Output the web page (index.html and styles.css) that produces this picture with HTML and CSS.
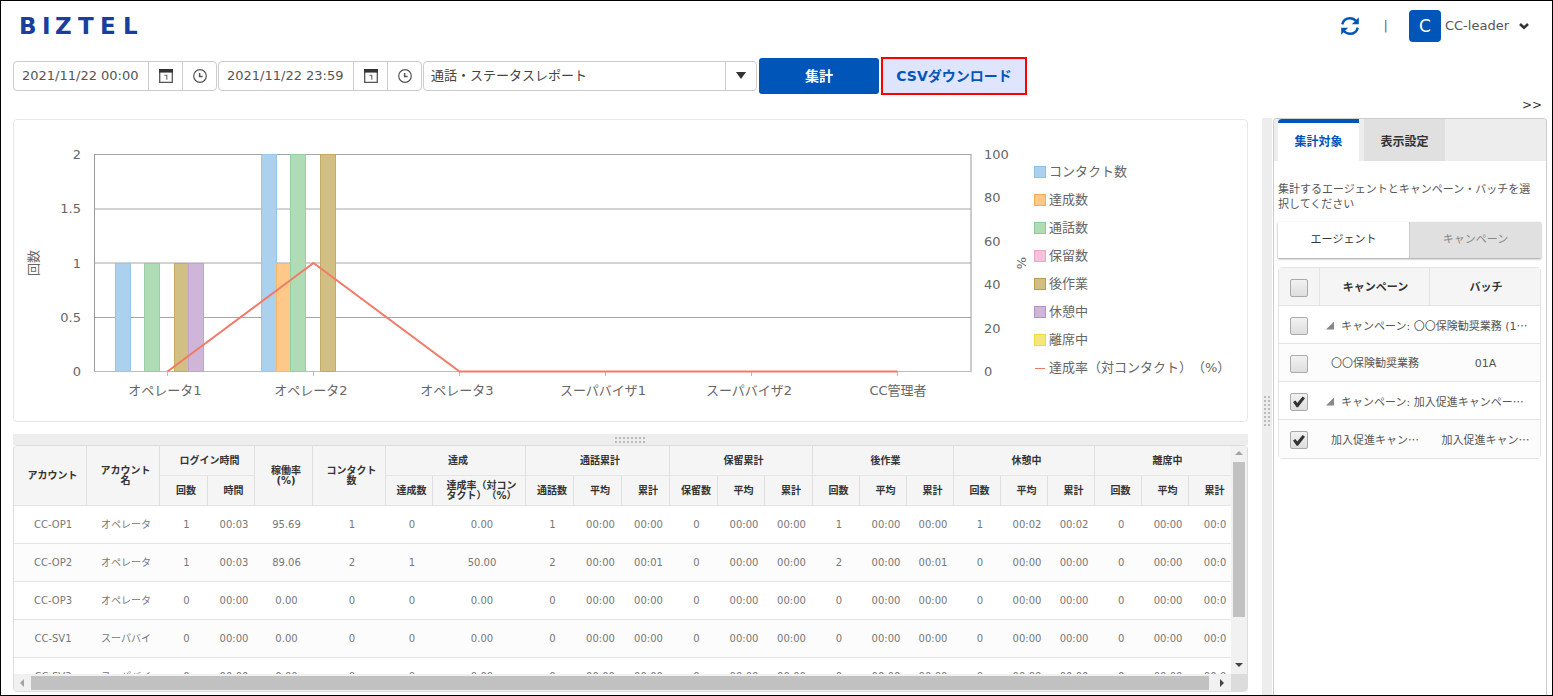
FILE: index.html
```html
<!DOCTYPE html>
<html lang="ja">
<head>
<meta charset="utf-8">
<title>BIZTEL 通話・ステータスレポート</title>
<link rel="stylesheet" href="styles.css">
</head>
<body>
<div class="app">
  <header class="header">
    <svg class="logo" width="130" height="24" viewBox="0 0 130 24" role="img" aria-label="BIZTEL">
      <text class="logo-text" x="0 23 36 59 81 104" y="20">BIZTEL</text>
    </svg>
    <div class="account">
      <button class="icon-button" type="button" aria-label="更新">
        <svg width="20" height="20" viewBox="0 0 20 20" fill="none" stroke="#0056b8" stroke-width="2.4">
          <path d="M2.2 8.4C3.2 4.600 6.4 2.2 10 2.2C12.6 2.2 14.8 3.4 16.4 5.2"/>
          <path d="M17.8 11.6C16.8 15.4 13.6 17.8 10 17.8C7.4 17.8 5.2 16.600 3.6 14.8"/>
          <path d="M18.8 1.2V8.2H11.8Z" fill="#0056b8" stroke="none"/>
          <path d="M1.2 18.8V11.8H8.2Z" fill="#0056b8" stroke="none"/>
        </svg>
      </button>
      <span class="divider">|</span>
      <button class="user" type="button">
        <span class="avatar">C</span>
        <span>CC-leader</span>
        <svg width="10" height="8" viewBox="0 0 10 8" fill="none" stroke="#333" stroke-width="2.6"><path d="M1 2L5 5.8L9 2"/></svg>
      </button>
    </div>
  </header>

  <form class="toolbar">
    <div class="datetime">
      <input class="datetime-input" type="text" value="2021/11/22 00:00" aria-label="開始日時">
      <button class="picker" type="button" aria-label="日付を選択"><svg width="14" height="14" viewBox="0 0 14 14"><path d="M.7 1v12.3h12.6V1" fill="none" stroke="#555" stroke-width="1.3"/><path d="M0 0h14v3.6H0z" fill="#333"/><path d="M5.4 6.2h2.4v4.6" fill="none" stroke="#666" stroke-width="1.1"/></svg></button>
      <button class="picker" type="button" aria-label="時刻を選択"><svg width="14" height="14" viewBox="0 0 14 14" fill="none" stroke="#555" stroke-width="1.2"><circle cx="7" cy="7" r="6.3"/><path d="M6.6 4v3.6h3" stroke-width="1.5"/></svg></button>
    </div>
    <div class="datetime">
      <input class="datetime-input" type="text" value="2021/11/22 23:59" aria-label="終了日時">
      <button class="picker" type="button" aria-label="日付を選択"><svg width="14" height="14" viewBox="0 0 14 14"><path d="M.7 1v12.3h12.6V1" fill="none" stroke="#555" stroke-width="1.3"/><path d="M0 0h14v3.6H0z" fill="#333"/><path d="M5.4 6.2h2.4v4.6" fill="none" stroke="#666" stroke-width="1.1"/></svg></button>
      <button class="picker" type="button" aria-label="時刻を選択"><svg width="14" height="14" viewBox="0 0 14 14" fill="none" stroke="#555" stroke-width="1.2"><circle cx="7" cy="7" r="6.3"/><path d="M6.6 4v3.6h3" stroke-width="1.5"/></svg></button>
    </div>
    <div class="report">
      <select class="report-select" aria-label="レポート種別"><option>通話・ステータスレポート</option></select>
      <span class="report-arrow"></span>
    </div>
    <button class="button-primary" type="button">集計</button>
    <button class="button-csv" type="button">CSVダウンロード</button>
  </form>

  <div class="collapse-row"><button class="collapse" type="button">&gt;&gt;</button></div>

  <main class="main">
    <section class="content">
      <div class="chart">
        <svg class="plot" viewBox="0 0 1016 301">
          <g class="grid-lines">
            <path d="M80 34.5H957M80 89H957M80 143H957M80 197.5H957"/>
            <path class="axis" d="M80.5 34V252M957 34V252"/>
            <path class="base" d="M80 251.5H957M153.5 252v4M299.5 252v4M445.5 252v4M591.5 252v4M737.5 252v4M883.5 252v4"/>
          </g>
          <g class="blue"><rect x="101.5" y="143.5" width="15" height="108"/><rect x="247.5" y="34.5" width="15" height="217"/></g>
          <g class="orange"><rect x="262.5" y="143.5" width="14" height="108"/></g>
          <g class="green"><rect x="130.5" y="143.5" width="15" height="108"/><rect x="276.5" y="34.5" width="15" height="217"/></g>
          <g class="brown"><rect x="160.5" y="143.5" width="14" height="108"/><rect x="306.5" y="34.5" width="15" height="217"/></g>
          <g class="purple"><rect x="174.5" y="143.5" width="15" height="108"/></g>
          <polyline class="rate-line" points="153.5,251.5 299.5,143 445.5,251.5 883.5,251.5"/>
          <g class="tick-end">
            <text x="67" y="39">2</text><text x="67" y="93">1.5</text><text x="67" y="148">1</text><text x="67" y="202">0.5</text><text x="67" y="256">0</text>
          </g>
          <g>
            <text x="970" y="39">100</text><text x="970" y="82">80</text><text x="970" y="126">60</text><text x="970" y="169">40</text><text x="970" y="213">20</text><text x="970" y="256">0</text>
          </g>
          <g class="tick-mid">
            <text x="151" y="275">オペレータ1</text><text x="297" y="275">オペレータ2</text><text x="443" y="275">オペレータ3</text><text x="589" y="275">スーパバイザ1</text><text x="735" y="275">スーパバイザ2</text><text x="884" y="275">CC管理者</text>
            <text transform="translate(24 143) rotate(-90)">回数</text>
            <text transform="translate(1012 143) rotate(-90)">%</text>
          </g>
        </svg>
        <ul class="legend">
          <li><span class="mark mark-blue"></span>コンタクト数</li>
          <li><span class="mark mark-orange"></span>達成数</li>
          <li><span class="mark mark-green"></span>通話数</li>
          <li><span class="mark mark-pink"></span>保留数</li>
          <li><span class="mark mark-brown"></span>後作業</li>
          <li><span class="mark mark-purple"></span>休憩中</li>
          <li><span class="mark mark-yellow"></span>離席中</li>
          <li><span class="mark-line"></span>達成率（対コンタクト）（%）</li>
        </ul>
      </div>

      <div class="splitter-h"><span class="grip grip-h"></span></div>

      <div class="grid">
        <div class="grid-view">
          <table class="data">
            <colgroup>
              <col class="col-name"><col class="col-name"><col class="col-time"><col class="col-num"><col class="col-rate"><col class="col-name"><col class="col-num"><col class="col-goal">
              <col class="col-time"><col class="col-time"><col class="col-time">
              <col class="col-time"><col class="col-num"><col class="col-time">
              <col class="col-num"><col class="col-num"><col class="col-num">
              <col class="col-num"><col class="col-num"><col class="col-num">
              <col class="col-num"><col class="col-num"><col class="col-num">
            </colgroup>
            <thead>
              <tr><th rowspan="2">アカウント</th><th rowspan="2">アカウント<br>名</th><th colspan="2">ログイン時間</th><th rowspan="2">稼働率<br>(%)</th><th rowspan="2">コンタクト<br>数</th><th colspan="2">達成</th><th colspan="3">通話累計</th><th colspan="3">保留累計</th><th colspan="3">後作業</th><th colspan="3">休憩中</th><th colspan="3">離席中</th></tr>
              <tr><th>回数</th><th>時間</th><th>達成数</th><th>達成率（対コン<br>タクト）（%）</th><th>通話数</th><th>平均</th><th>累計</th><th>保留数</th><th>平均</th><th>累計</th><th>回数</th><th>平均</th><th>累計</th><th>回数</th><th>平均</th><th>累計</th><th>回数</th><th>平均</th><th>累計</th></tr>
            </thead>
            <tbody>
              <tr><td>CC-OP1</td><td>オペレータ</td><td>1</td><td>00:03</td><td>95.69</td><td>1</td><td>0</td><td>0.00</td><td>1</td><td>00:00</td><td>00:00</td><td>0</td><td>00:00</td><td>00:00</td><td>1</td><td>00:00</td><td>00:00</td><td>1</td><td>00:02</td><td>00:02</td><td>0</td><td>00:00</td><td>00:0</td></tr>
              <tr><td>CC-OP2</td><td>オペレータ</td><td>1</td><td>00:03</td><td>89.06</td><td>2</td><td>1</td><td>50.00</td><td>2</td><td>00:00</td><td>00:01</td><td>0</td><td>00:00</td><td>00:00</td><td>2</td><td>00:00</td><td>00:01</td><td>0</td><td>00:00</td><td>00:00</td><td>0</td><td>00:00</td><td>00:0</td></tr>
              <tr><td>CC-OP3</td><td>オペレータ</td><td>0</td><td>00:00</td><td>0.00</td><td>0</td><td>0</td><td>0.00</td><td>0</td><td>00:00</td><td>00:00</td><td>0</td><td>00:00</td><td>00:00</td><td>0</td><td>00:00</td><td>00:00</td><td>0</td><td>00:00</td><td>00:00</td><td>0</td><td>00:00</td><td>00:0</td></tr>
              <tr><td>CC-SV1</td><td>スーパバイ</td><td>0</td><td>00:00</td><td>0.00</td><td>0</td><td>0</td><td>0.00</td><td>0</td><td>00:00</td><td>00:00</td><td>0</td><td>00:00</td><td>00:00</td><td>0</td><td>00:00</td><td>00:00</td><td>0</td><td>00:00</td><td>00:00</td><td>0</td><td>00:00</td><td>00:0</td></tr>
              <tr><td>CC-SV2</td><td>スーパバイ</td><td>0</td><td>00:00</td><td>0.00</td><td>0</td><td>0</td><td>0.00</td><td>0</td><td>00:00</td><td>00:00</td><td>0</td><td>00:00</td><td>00:00</td><td>0</td><td>00:00</td><td>00:00</td><td>0</td><td>00:00</td><td>00:00</td><td>0</td><td>00:00</td><td>00:0</td></tr>
            </tbody>
          </table>
        </div>
        <div class="scroll-v"><span class="arrow arrow-up"></span><span class="thumb-v"></span><span class="scroll-rest"></span><span class="arrow arrow-down"></span></div>
        <div class="scroll-h"><span class="arrow arrow-left"></span><span class="thumb-h"></span><span class="arrow arrow-right"></span></div>
        <div class="corner"></div>
      </div>
    </section>

    <div class="splitter-v"><span class="grip grip-v"></span></div>

    <aside class="panel">
      <div class="tabs" role="tablist">
        <button class="tab tab-active" type="button" role="tab" aria-selected="true">集計対象</button>
        <button class="tab" type="button" role="tab" aria-selected="false">表示設定</button>
      </div>
      <div class="panel-body">
        <p class="hint">集計するエージェントとキャンペーン・バッチを選択してください</p>
        <div class="switch">
          <button class="switch-item" type="button">エージェント</button>
          <button class="switch-item switch-off" type="button">キャンペーン</button>
        </div>
        <table class="targets">
          <colgroup><col class="col-check"><col class="col-campaign"><col></colgroup>
          <thead>
            <tr><th><input class="check" type="checkbox" aria-label="すべて選択"></th><th>キャンペーン</th><th>バッチ</th></tr>
          </thead>
          <tbody>
            <tr><td><input class="check" type="checkbox" aria-label="〇〇保険勧奨業務"></td><td class="group" colspan="2"><span class="expander"></span>キャンペーン: 〇〇保険勧奨業務 (1<span class="more">…</span></td></tr>
            <tr><td><input class="check" type="checkbox" aria-label="01A"></td><td>〇〇保険勧奨業務</td><td>01A</td></tr>
            <tr><td><input class="check" type="checkbox" checked aria-label="加入促進キャンペーン"></td><td class="group" colspan="2"><span class="expander"></span>キャンペーン: 加入促進キャンペー<span class="more">…</span></td></tr>
            <tr><td><input class="check" type="checkbox" checked aria-label="加入促進バッチ"></td><td>加入促進キャン<span class="more">…</span></td><td>加入促進キャン<span class="more">…</span></td></tr>
          </tbody>
        </table>
      </div>
    </aside>
  </main>
</div>
</body>
</html>
```
FILE: styles.css
```css
* { box-sizing: border-box; }

body {
  margin: 0;
  font: 13px/20px "DejaVu Sans", "Noto Sans CJK JP", sans-serif;
  color: #555;
  background: #fff;
  text-spacing-trim: space-all;
}

button, input, select {
  margin: 0;
  padding: 0;
  font: inherit;
  color: inherit;
  background: none;
  border: 0;
}

.app {
  display: flex;
  flex-direction: column;
  height: 100vh;
  padding: 0 5px 0 12px;
  border: 1px solid #000;
  overflow: hidden;
}

/* header */
.header {
  display: flex;
  align-items: center;
  justify-content: space-between;
  height: 50px;
  padding: 0 18px 0 6px;
}
.logo-text { font: bold 23px "DejaVu Sans", sans-serif; fill: #173f9b; }
.account { display: flex; align-items: center; }
.icon-button { display: flex; }
.divider { margin: 0 21px 0 24px; color: #666; }
.user { display: flex; align-items: center; gap: 4px; }
.user svg { margin-left: 6px; }
.avatar {
  display: flex;
  align-items: center;
  justify-content: center;
  width: 32px;
  height: 32px;
  border-radius: 4px;
  background: #0056b8;
  color: #fff;
  font-size: 17px;
}

/* toolbar */
.toolbar { display: flex; align-items: center; gap: 1px; height: 38px; margin-top: 6px; }
.datetime, .report {
  display: flex;
  height: 30px;
  border: 1px solid #ccc;
  border-radius: 4px;
}
.datetime { width: 204px; }
.datetime-input { flex: 1; min-width: 0; padding-left: 8px; }
.picker {
  display: flex;
  align-items: center;
  justify-content: center;
  width: 34px;
  border-left: 1px solid #ccc;
}
.report { position: relative; width: 334px; }
.report-select { appearance: none; width: 100%; padding-left: 7px; color: #444; }
.report-arrow {
  position: absolute;
  top: 0;
  right: 0;
  width: 31px;
  height: 28px;
  border-left: 1px solid #ccc;
  pointer-events: none;
}
.report-arrow::before {
  content: "";
  position: absolute;
  top: 10px;
  left: 10px;
  border: 5px solid transparent;
  border-top: 7px solid #333;
  border-bottom: 0;
}
.button-primary {
  width: 120px;
  height: 36px;
  margin: 0 1px;
  border-radius: 3px;
  background: #0056b8;
  color: #fff;
  font-size: 14px;
  font-weight: bold;
}
.button-csv {
  width: 146px;
  height: 38px;
  border: 2px solid #f00;
  background: #dfe5ff;
  color: #0056b8;
  font-size: 14px;
  font-weight: bold;
}
.collapse-row { display: flex; justify-content: flex-end; height: 23px; padding-right: 5px; }
.collapse { height: 20px; font-size: 12px; color: #333; }

/* main area */
.main { display: flex; flex: 1; min-height: 0; }
.content {
  display: flex;
  flex: 1;
  flex-direction: column;
  min-width: 0;
  margin-right: 14px;
  padding: 1px 0 3px;
}

/* chart */
.chart { display: flex; border: 1px solid #e8e8e8; border-radius: 4px; }
.plot { display: block; flex: 1; min-width: 0; fill: #666; }
.grid-lines path { fill: none; stroke: #a6a6a6; }
.grid-lines .axis { stroke: #999; }
.grid-lines .base { stroke: #bbb; }
.tick-end { text-anchor: end; }
.tick-mid { text-anchor: middle; }
.blue { fill: #abd1ee; stroke: #98c6ea; }
.orange { fill: #fdc888; stroke: #f9b869; }
.green { fill: #b0dcb5; stroke: #97d09f; }
.brown { fill: #d2bf84; stroke: #c4ab60; }
.purple { fill: #cfb5d8; stroke: #c3a2ce; }
.rate-line { fill: none; stroke: #f47a68; stroke-width: 2; }
.legend {
  flex: 0 0 217px;
  margin: 0;
  padding: 38px 0 0 4px;
  list-style: none;
  line-height: 28px;
  color: #666;
  white-space: nowrap;
}
.legend li { display: flex; align-items: center; gap: 3px; }
.mark { width: 12px; height: 12px; border: 1px solid; }
.mark-blue { background: #abd1ee; border-color: #8fc0e6; }
.mark-orange { background: #fdc888; border-color: #f7ab50; }
.mark-green { background: #b0dcb5; border-color: #8dca96; }
.mark-pink { background: #f9c0dc; border-color: #f3a6cb; }
.mark-brown { background: #d2bf84; border-color: #b99d4c; }
.mark-purple { background: #cfb5d8; border-color: #b891c6; }
.mark-yellow { background: #f3e67b; border-color: #eadb45; }
.mark-line { width: 10px; height: 1px; margin: 0 1px; background: #f47a68; }

/* splitters */
.splitter-h, .splitter-v { display: flex; align-items: center; justify-content: center; background: #ededed; }
.splitter-h { height: 11px; margin-top: 12px; }
.splitter-v { width: 10px; margin-right: 1px; padding-top: 10px; }
.grip { background: repeating-conic-gradient(#ededed 0 75%, #bbb 0 100%) 0 0 / 4px 4px; }
.grip-h { width: 32px; height: 6px; }
.grip-v { width: 6px; height: 32px; }

/* data grid */
.grid {
  display: grid;
  flex: 1;
  grid-template: minmax(0, 1fr) 17px / minmax(0, 1fr) 16px;
  min-height: 0;
  border: 1px solid #ddd;
  border-radius: 4px;
  overflow: hidden;
}
.grid-view { overflow: hidden; }
.data {
  width: 1222px;
  table-layout: fixed;
  border-collapse: separate;
  border-spacing: 0;
  font-size: 10px;
  line-height: 10px;
  text-align: center;
  color: #777;
}
.col-name { width: 73px; }
.col-time { width: 48px; }
.col-num { width: 47px; }
.col-rate { width: 58px; }
.col-goal { width: 93px; }
.data th, .data td { padding: 0 4px 0 9px; border-bottom: 1px solid #e4e4e4; }
.data th { height: 30px; border-right: 1px solid #e0e0e0; background: #f5f5f5; color: #333; }
.data td { height: 38px; white-space: nowrap; }
.data tbody tr:nth-child(even) { background: #fcfcfc; }

.scroll-v, .scroll-h { display: flex; align-items: center; background: #f1f1f1; }
.scroll-v { flex-direction: column; padding: 5px 0 7px; }
.scroll-h { padding: 0 7px 0 6px; }
.thumb-v { flex: 155; width: 12px; margin-top: 7px; background: #c1c1c1; }
.scroll-rest { flex: 46; }
.thumb-h { flex: 1; height: 14px; margin: 0 11px 0 7px; background: #c1c1c1; }
.arrow { border: 4px solid transparent; }
.arrow-up { border-bottom-color: #a3a3a3; border-top-width: 0; }
.arrow-down { border-top-color: #444; border-bottom-width: 0; }
.arrow-left { border-right-color: #a3a3a3; border-left-width: 0; }
.arrow-right { border-left-color: #444; border-right-width: 0; }
.corner { background: #dcdcdc; }

/* side panel */
.panel {
  flex: 0 0 274px;
  border: 1px solid #ccc;
  border-bottom: 0;
  border-radius: 4px 4px 0 0;
  overflow: hidden;
}
.tabs { display: flex; gap: 5px; height: 42px; padding-left: 4px; background: #ededed; }
.tab {
  width: 81px;
  border-top: 4px solid #e0e0e0;
  background: #e0e0e0;
  color: #333;
  font-size: 12px;
  font-weight: bold;
}
.tab-active { border-color: #0056b8; border-radius: 4px 0 0; background: #fff; color: #0056b8; }
.panel-body { padding: 21px 5px 0 4px; font-size: 11px; }
.hint { margin: 0; line-height: 15px; }
.switch { display: flex; height: 36px; margin-top: 10px; box-shadow: 0 1px 2px #999; }
.switch-item { flex: 1; color: #333; background: #fff; }
.switch-off { border-left: 1px solid #ccc; background: #e0e0e0; color: #888; }
.targets {
  width: 100%;
  margin-top: 9px;
  table-layout: fixed;
  border: 1px solid #e4e4e4;
  border-radius: 4px;
  border-collapse: separate;
  border-spacing: 0;
  line-height: 16px;
  text-align: center;
}
.col-check { width: 40px; }
.col-campaign { width: 110px; }
.targets th, .targets td { height: 38px; padding: 2px 0 0; border-bottom: 1px solid #e4e4e4; white-space: nowrap; }
.targets th { background: #f5f5f5; color: #333; }
.targets th + th { padding-left: 2px; border-left: 1px solid #e4e4e4; }
.targets td + td { padding-left: 2px; }
.targets tbody tr:nth-child(even) { background: #fcfcfc; }
.targets tbody tr:last-child td { border-bottom: 0; }
.targets td.group { padding-left: 7px; text-align: left; }
.more { font-family: "Noto Sans CJK JP", sans-serif; }
.expander {
  display: inline-block;
  width: 8px;
  height: 8px;
  margin-right: 7px;
  background: #888;
  clip-path: polygon(100% 0, 100% 100%, 0 100%);
}
.check {
  display: block;
  appearance: none;
  width: 18px;
  height: 18px;
  margin: 0 auto;
  border: 1px solid #aaa;
  border-radius: 2px;
  background: linear-gradient(#f2f2f2, #dedede);
}
.check:checked::before {
  content: "";
  display: block;
  width: 12px;
  height: 12px;
  margin: 2px;
  background: #333;
  clip-path: polygon(0 55%, 20% 42%, 36% 62%, 80% 8%, 100% 22%, 42% 98%, 30% 98%);
}
```
